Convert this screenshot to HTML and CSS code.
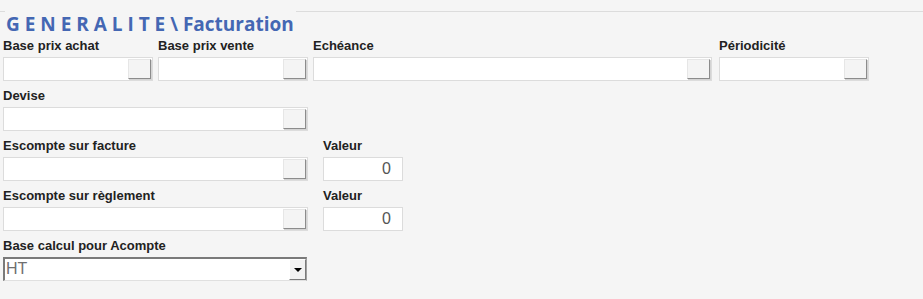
FILE: index.html
```html
<!DOCTYPE html>
<html>
<head>
  <title>Generalite - Facturation</title>
  <link rel="stylesheet" href="styles.css">
</head>
<body>
  <div class="page">
    <div class="section-head">
      <span class="line line-left"></span>
      <span class="section-title">G E N E R A L I T E \ Facturation</span>
      <span class="line line-right"></span>
    </div>

    <div class="row">
      <div class="field w150">
        <label>Base prix achat</label>
        <div class="lookup"><span class="lookup-btn"></span></div>
      </div>
      <div class="field w150">
        <label>Base prix vente</label>
        <div class="lookup"><span class="lookup-btn"></span></div>
      </div>
      <div class="field w400">
        <label>Echéance</label>
        <div class="lookup"><span class="lookup-btn"></span></div>
      </div>
      <div class="field w150">
        <label>Périodicité</label>
        <div class="lookup"><span class="lookup-btn"></span></div>
      </div>
    </div>

    <div class="row">
      <div class="field w305">
        <label>Devise</label>
        <div class="lookup"><span class="lookup-btn"></span></div>
      </div>
    </div>

    <div class="row">
      <div class="field w305">
        <label>Escompte sur facture</label>
        <div class="lookup"><span class="lookup-btn"></span></div>
      </div>
      <div class="field w80 value-field">
        <label>Valeur</label>
        <div class="number">0</div>
      </div>
    </div>

    <div class="row">
      <div class="field w305">
        <label>Escompte sur règlement</label>
        <div class="lookup"><span class="lookup-btn"></span></div>
      </div>
      <div class="field w80 value-field">
        <label>Valeur</label>
        <div class="number">0</div>
      </div>
    </div>

    <div class="row">
      <div class="field w304">
        <label>Base calcul pour Acompte</label>
        <div class="combo">
          <span class="combo-text">HT</span>
          <span class="combo-btn"><span class="arrow"></span></span>
        </div>
      </div>
    </div>
  </div>
</body>
</html>
```

FILE: styles.css
```css
html, body {
  margin: 0;
  height: 100%;
  background: #f5f5f5;
  font-family: 'Liberation Sans', Arial, sans-serif;
  color: #222;
}
.page {
  padding: 11px 0 0 3px;
}
.section-head {
  display: flex;
  align-items: flex-start;
  margin-left: -3px;
}
.line {
  height: 1px;
  background: #dcdcdc;
}
.line-left {
  width: 5px;
}
.line-right {
  flex: 1;
  margin-left: 2px;
}
.section-title {
  font-family: 'Open Sans', sans-serif;
  font-weight: bold;
  font-size: 19px;
  line-height: 26px;
  color: #4467b3;
  white-space: pre;
  padding-left: 1px;
}
.row {
  display: flex;
  margin-bottom: 6px;
}
.field {
  margin-right: 5px;
}
.field label {
  display: block;
  font-size: 13px;
  font-weight: bold;
  line-height: 16px;
  padding-top: 1px;
  margin-bottom: 3px;
}
.w150 { width: 150px; }
.w400 { width: 399px; margin-right: 7px; }
.w305 { width: 305px; }
.w304 { width: 304px; }
.w80 { width: 80px; }
.value-field {
  margin-left: 10px;
}
.lookup {
  box-sizing: border-box;
  height: 24px;
  background: #fff;
  border: 1px solid #dcdcdc;
  display: flex;
  justify-content: flex-end;
  align-items: flex-start;
  padding: 1px 1px 0 0;
}
.lookup-btn {
  box-sizing: border-box;
  width: 23px;
  height: 20px;
  background: #f4f4f4;
  border: 1px solid #e6e6e6;
  border-right-color: #8c8c8c;
  border-bottom-color: #8c8c8c;
  box-shadow: 1px 1px 0 #d4d4d4;
}
.number {
  box-sizing: border-box;
  height: 24px;
  background: #fff;
  border: 1px solid #dcdcdc;
  text-align: right;
  padding-right: 11px;
  font-size: 16px;
  line-height: 22px;
  color: #555;
}
.combo {
  box-sizing: border-box;
  height: 24px;
  background: #fff;
  border: 2px solid #7a7a7a;
  border-bottom: 1px solid #e0e0e0;
  border-right: 1px solid #a0a0a0;
  display: flex;
  align-items: flex-start;
}
.combo-text {
  flex: 1;
  font-size: 16px;
  line-height: 20px;
  color: #6f6f6f;
  padding-left: 1px;
}
.combo-btn {
  box-sizing: border-box;
  width: 17px;
  height: 21px;
  background: #f2f2f2;
  border: 1px solid #fff;
  border-right-color: #7a7a7a;
  border-bottom-color: #7a7a7a;
  display: flex;
  align-items: center;
  justify-content: center;
}
.arrow {
  width: 0;
  height: 0;
  border-left: 4px solid transparent;
  border-right: 4px solid transparent;
  border-top: 4px solid #000;
}
```
